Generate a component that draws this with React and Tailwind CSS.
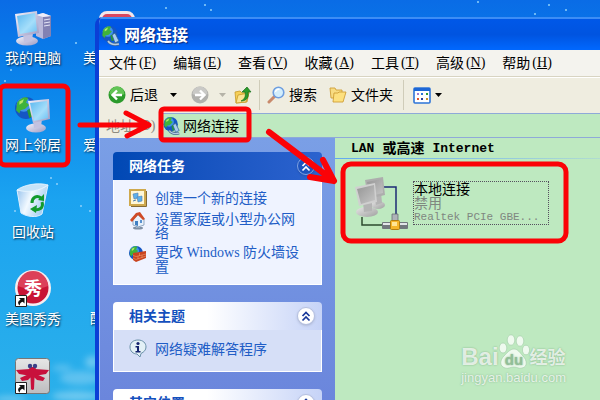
import { useState } from "react";

function ComputerIcon() {
  return (
    <svg className="h-10 w-10" viewBox="0 0 40 40">
      <defs>
        <linearGradient id="screen" x1="0" y1="0" x2="1" y2="1">
          <stop offset="0" stopColor="#5cb8f0" />
          <stop offset="0.6" stopColor="#a5defa" />
          <stop offset="1" stopColor="#6cc0f2" />
        </linearGradient>
        <linearGradient id="lilac" x1="0" y1="0" x2="1" y2="1">
          <stop offset="0" stopColor="#f4f3fc" />
          <stop offset="1" stopColor="#9c9bc4" />
        </linearGradient>
      </defs>
      <path d="M23 7l7-2 8 3v20l-8 3-7-3z" fill="#b9b8da" />
      <path d="M30 9l8-1v20l-8 3z" fill="#8281b3" />
      <path d="M31 12l6-1M31 15l6-1M31 18l6-1" stroke="#e6e6f7" strokeWidth="1" />
      <path d="M23 7l7-2 8 3-8 1z" fill="#eeeefa" />
      <ellipse cx="14" cy="33" rx="11" ry="4.5" fill="url(#lilac)" />
      <path d="M10 26l10-1-1 8-8 1z" fill="#c3c2e0" />
      <path d="M2 6l22-3 2 22-21 4z" fill="url(#lilac)" />
      <path d="M4 8l18-3 2 18-17 3z" fill="url(#screen)" />
    </svg>
  );
}

function GlobeShape({ cx, cy, r }) {
  const s = r / 10;
  return (
    <g transform={`translate(${cx} ${cy}) scale(${s})`}>
      <circle r="10" fill="#1556c4" />
      <circle cx="-2" cy="-3" r="6.5" fill="#3f93ea" />
      <path d="M-8-5c3-4 7-6 10-4l-2 4 3 2-4 4-4 1-1 3-3-3z" fill="#3fb33b" />
      <path d="M1 2l5-3 3 3-2 5-4 2z" fill="#279b36" />
      <path d="M-6-6l4-2-1 3-3 2z" fill="#b4e86e" />
    </g>
  );
}

function NetworkPlacesIcon() {
  return (
    <svg className="h-10 w-10" viewBox="0 0 40 40">
      <GlobeShape cx={13} cy={13} r={11} />
      <ellipse cx="23" cy="33" rx="10" ry="4.500" fill="url(#lilac)" />
      <path d="M20 25l9-1-1 8-7 1z" fill="#c3c2e0" />
      <path d="M15 6l21-2 1 20-17 4z" fill="url(#lilac)" />
      <path d="M17 8l17-2 1 17-14 3z" fill="url(#screen)" />
    </svg>
  );
}

function RecycleBinIcon() {
  return (
    <svg className="h-10 w-10" viewBox="0 0 40 40">
      <defs>
        <linearGradient id="bin" x1="0" y1="0" x2="1" y2="0.4">
          <stop offset="0" stopColor="#8dbdec" />
          <stop offset="0.5" stopColor="#f2f9ff" />
          <stop offset="1" stopColor="#a4cdf1" />
        </linearGradient>
      </defs>
      <path d="M4 8l4 23c6 4 16 5 21 1l6-29c-8 5-20 7-31 5z" fill="url(#bin)" stroke="#dcefff" />
      <path d="M4 8c6-5 21-8 31-5-8 6-21 8-31 5z" fill="#c6e3f8" stroke="#eef8ff" strokeWidth="0.8" />
      <g fill="none" stroke="#129b2d" strokeWidth="3">
        <path d="M19 21c0-6 5-8 9-5" />
        <path d="M29 20c2 6-3 9-9 7" />
      </g>
      <path d="M25 18l6 1v-7zM24 23l-7 4 6 4z" fill="#129b2d" />
    </svg>
  );
}

function ShortcutArrow() {
  return (
    <g>
      <path d="M2.500 26.500h11v11h-11z" fill="#fff" stroke="#222" />
      <path d="M6 29h5.500v5.500l-1.800-1.800c-2 .6-3 1.800-3 3.800-2.600-2.500-1.700-4.600.9-5.800z" fill="#111" />
    </g>
  );
}

function MeituIcon() {
  return (
    <svg className="h-10 w-10" viewBox="0 0 40 40">
      <circle cx="20" cy="19" r="18" fill="#f7eef0" />
      <circle cx="20" cy="19" r="15.500" fill="#c91435" />
      <path d="M5 17a15 15 0 0 1 30 0c-9 4-21 4-30 0z" fill="#dc4059" />
      <text x="20" y="26" textAnchor="middle" fontSize="18" fontWeight="700" fill="#fff">
        秀
      </text>
      <ShortcutArrow />
    </svg>
  );
}

function DragonflyIcon() {
  return (
    <svg className="h-10 w-10" viewBox="0 0 40 40">
      <defs>
        <linearGradient id="tile" x1="0" y1="0" x2="0" y2="1">
          <stop offset="0" stopColor="#e6e6e6" />
          <stop offset="1" stopColor="#bdbdbf" />
        </linearGradient>
      </defs>
      <rect x="2.500" y="2.500" width="34" height="35" rx="3" fill="url(#tile)" stroke="#777" />
      <path d="M16.500 11h6l1 6-2 5-.5 11q-1.500 2-3 0L17.500 22l-2-5z" fill="#c8103c" />
      <path d="M3 14l14-1h5l14 1-3 4-9 1.500h-9L6 18z" fill="#c8103c" />
      <path d="M16 18l-9 4 2 3 6-1 4-4h1l4 4 6 1 2-3-9-4z" fill="#c8103c" />
      <circle cx="17" cy="10" r="2.200" fill="#3b3f86" />
      <circle cx="22" cy="10" r="2.200" fill="#3b3f86" />
      <ShortcutArrow />
    </svg>
  );
}

function NetworkIcon({ className }) {
  return (
    <svg className={className} viewBox="0 0 20 20">
      <GlobeShape cx={8.5} cy={8} r={8} />
      <path d="M11 9l3-2 4 8-4 2z" fill="#a9cdee" stroke="#2f5f94" strokeWidth="0.8" />
      <path d="M7 15c2 3 6 4 11 3" fill="none" stroke="#47698f" strokeWidth="3" />
      <path d="M7 15c2 3 6 4 11 3" fill="none" stroke="#b4cbe2" strokeWidth="1.500" />
    </svg>
  );
}

function ArrowDisc({ color, light, back }) {
  return (
    <svg className="h-[18px] w-[18px]" viewBox="0 0 18 18">
      <circle cx="9" cy="9" r="8.500" fill={color} />
      <path d="M1.500 8a7.500 7.500 0 0 1 15 0c-4 2-11 2-15 0z" fill={light} />
      <path
        d={back ? "M14 9H5M9 4.500L4.500 9 9 13.500" : "M4 9h9M9 4.500L13.500 9 9 13.500"}
        fill="none"
        stroke="#fff"
        strokeWidth="2.400"
      />
    </svg>
  );
}

function Caret({ className }) {
  return (
    <svg className={`h-1 w-[7px] ${className}`} viewBox="0 0 7 4">
      <path d="M0 0h7L3.500 4z" fill="currentColor" />
    </svg>
  );
}

function FolderUpIcon() {
  return (
    <svg className="h-[18px] w-[18px]" viewBox="0 0 18 18">
      <path d="M1 6l5-1 2 2 7-1-2 10-11 1z" fill="#f6cf58" stroke="#c79a28" strokeWidth="0.8" />
      <path d="M4 9l11-2-3 9-10 1z" fill="#fbe493" stroke="#c79a28" strokeWidth="0.8" />
      <path d="M7 15c4-2 5-5 4-9H8l5-5 4 5h-3c1 5-1 9-7 9z" fill="#2c9b2b" stroke="#16701a" strokeWidth="0.700" />
    </svg>
  );
}

function SearchIcon() {
  return (
    <svg className="h-[18px] w-[18px]" viewBox="0 0 18 18">
      <path d="M8 10l-6 6" stroke="#c98a6c" strokeWidth="3" strokeLinecap="round" />
      <circle cx="11.500" cy="6.500" r="5.300" fill="#d3eefc" stroke="#6f9fe0" strokeWidth="1.600" />
      <path d="M8.500 6c0-2 2-3 4-2.500" stroke="#fff" strokeWidth="1.500" fill="none" />
    </svg>
  );
}

function FoldersIcon() {
  return (
    <svg className="h-[18px] w-[18px]" viewBox="0 0 18 18">
      <path d="M1 2h5l1 2h6v8H2z" fill="#f8dc82" stroke="#cf9e35" strokeWidth="0.900" />
      <path d="M5 7h4l1-1h7l-3 10H4z" fill="#fde07e" stroke="#cf9e35" strokeWidth="0.900" />
    </svg>
  );
}

function ViewsIcon() {
  return (
    <svg className="h-[17px] w-[18px]" viewBox="0 0 18 17">
      <rect x="1" y="1" width="16" height="15" rx="1" fill="#fff" stroke="#2d74d8" strokeWidth="1.600" />
      <path d="M1 1h16v3H1z" fill="#1d67d6" />
      <path d="M4 6h2v2H4z" fill="#a07bd0" />
      <path d="M8 6h2v2H8z" fill="#2b75d9" />
      <path d="M13 6h2v2h-2z" fill="#2b9a3a" />
      <path d="M4 11h2v2H4z" fill="#e2522b" />
      <path d="M8 11h2v2H8z" fill="#2b3d9a" />
      <path d="M13 11h2v2h-2z" fill="#c9902a" />
    </svg>
  );
}

function NewConnectionIcon() {
  return (
    <svg className="h-[18px] w-[18px] shrink-0" viewBox="0 0 18 18">
      <path d="M1 1h15v15H1z" fill="#fff7d8" stroke="#cfa94e" strokeWidth="2" />
      <path d="M17.500 2v15.500H2" fill="none" stroke="#856a35" />
      <path d="M4 5l5-1v5l-4 1z" fill="#5db0ec" stroke="#507cae" strokeWidth="0.600" />
      <path d="M8 8l5-1v5l-4 1z" fill="#5db0ec" stroke="#507cae" strokeWidth="0.600" />
      <path d="M4 12l3-1" stroke="#507cae" />
    </svg>
  );
}

function HomeIcon() {
  return (
    <svg className="h-[18px] w-[18px] shrink-0" viewBox="0 0 18 18">
      <ellipse cx="9" cy="16" rx="5" ry="1.500" fill="#7f8fa4" />
      <path d="M7 13h4v3H7z" fill="#9eb0c5" />
      <path d="M4 7l5-4 6 4v6l-6 2-5-2z" fill="#e8f1fb" stroke="#6f8bab" strokeWidth="0.700" />
      <path d="M1 8l6-7 4-1 5 7-2 1-5-5-6 7z" fill="#cf4a27" />
      <path d="M6 9h3v5l-3-1z" fill="#3f7fc3" />
      <path d="M11 8h2v3h-2z" fill="#5a92d0" />
    </svg>
  );
}

function FirewallIcon() {
  return (
    <svg className="h-[18px] w-[18px] shrink-0" viewBox="0 0 18 18">
      <GlobeShape cx={7} cy={8} r={7} />
      <path d="M4 8l13-2v7l-10 4-3-2z" fill="#c9441f" />
      <path d="M4 10.500l3 1 10-2.500M4 13l3 1.500 10-3.500M10.500 8v3M13 10v3M9 11v3" fill="none" stroke="#eb9a70" strokeWidth="0.600" />
    </svg>
  );
}

function InfoIcon() {
  return (
    <svg className="h-[19px] w-[18px] shrink-0" viewBox="0 0 18 19">
      <path d="M9 1c5 0 8 3 8 7 0 3-2 5-5 6.500L11 18l-3-3c-4 0-7-3-7-7s3-7 8-7z" fill="#e3f1f6" stroke="#6a90a8" />
      <circle cx="9" cy="4.500" r="1.600" fill="#14246e" />
      <path d="M6.500 7H10v5h1.500v1.500h-5V12H8V8.500H6.500z" fill="#14246e" />
    </svg>
  );
}

function LanIcon() {
  return (
    <svg className="h-[54px] w-[54px] shrink-0" viewBox="0 0 54 54">
      <defs>
        <linearGradient id="off" x1="0" y1="0" x2="1" y2="1">
          <stop offset="0" stopColor="#959595" />
          <stop offset="1" stopColor="#c6c6c6" />
        </linearGradient>
        <linearGradient id="base" x1="0" y1="0" x2="1" y2="1">
          <stop offset="0" stopColor="#e6e6e6" />
          <stop offset="1" stopColor="#9f9f9f" />
        </linearGradient>
      </defs>
      <path d="M29 10h12v28" fill="none" stroke="#1c2a75" strokeWidth="1.500" />
      <path d="M7 40v8h20" fill="none" stroke="#2c4a2e" strokeWidth="1.500" />
      <ellipse cx="23" cy="28" rx="7" ry="4" fill="url(#base)" />
      <path d="M19 17l7-2 1 11-6 2z" fill="#b4b4b4" />
      <path d="M10 3l18-3 2 18-17 4z" fill="#adadad" />
      <path d="M12 5l15-3 1 14-13 3z" fill="url(#off)" />
      <ellipse cx="12" cy="35" rx="11" ry="5" fill="url(#base)" />
      <path d="M8 25l9-2v11l-8 1z" fill="#b4b4b4" />
      <path d="M0 10l20-4 2 19-18 4z" fill="#d0d0d0" />
      <path d="M2 12l17-4 1 15-14 4z" fill="url(#off)" />
      <path d="M37 37h6v8h-6z" fill="#aeb3b8" stroke="#60666c" strokeWidth="0.700" />
      <rect x="27" y="45" width="26" height="7" rx="1" fill="#71777d" />
      <path d="M28 46h24v2H28z" fill="#e2e5e8" />
      <rect x="35.500" y="43.500" width="9" height="9" rx="1" fill="#f5b62b" stroke="#b27d12" />
      <path d="M37 45h5v4h-5z" fill="#ffe595" />
    </svg>
  );
}

const shortcuts = [
  { label: "我的电脑", icon: <ComputerIcon /> },
  { label: "网上邻居", icon: <NetworkPlacesIcon /> },
  { label: "回收站", icon: <RecycleBinIcon /> },
  { label: "美图秀秀", icon: <MeituIcon /> },
  { label: "", icon: <DragonflyIcon /> },
];

const menus = [
  ["文件", "F"],
  ["编辑", "E"],
  ["查看", "V"],
  ["收藏", "A"],
  ["工具", "T"],
  ["高级", "N"],
  ["帮助", "H"],
];

const mono = "font-['Liberation_Mono','Noto_Sans_CJK_SC',monospace]";
const serif = "font-['Liberation_Serif','Noto_Sans_CJK_SC',serif]";
const iconLabel = "text-sm leading-4 whitespace-nowrap text-white [text-shadow:1px_1px_2px_#06213f]";

function Shortcuts() {
  return (
    <div className="absolute top-2 left-0 flex w-[66px] flex-col">
      {shortcuts.map((item, i) => (
        <button key={i} className="flex h-[87px] flex-col items-center" aria-label={item.label || "快捷方式"}>
          <span className="h-10">{item.icon}</span>
          <span className={`mt-0.5 ${iconLabel}`}>{item.label}</span>
        </button>
      ))}
    </div>
  );
}

// second icon column, mostly behind the window
function CoveredShortcuts() {
  return (
    <div className="absolute top-[11px] left-[83px] flex flex-col">
      <div className="ml-4 flex h-[39px]">
        <div className="h-8 w-[36px] rounded-lg border-3 border-[#f2e6ea] bg-[#d8465f]" />
      </div>
      <span className={`h-[87px] ${iconLabel}`}>美</span>
      <span className={`h-[173px] ${iconLabel}`}>爱</span>
      <span className={`pl-[7px] ${iconLabel}`}>酷</span>
    </div>
  );
}

function Wallpaper() {
  return (
    <svg className="absolute inset-0 h-full w-full" viewBox="0 0 600 400" preserveAspectRatio="xMinYMin slice">
      <defs>
        <filter id="soft" x="-50%" y="-50%" width="200%" height="200%">
          <feGaussianBlur stdDeviation="3" />
        </filter>
      </defs>
      <g fill="#bfe6f8" filter="url(#soft)">
        <ellipse cx="80" cy="378" rx="20" ry="7" opacity="0.350" />
        <ellipse cx="92" cy="362" rx="7" ry="6" opacity="0.450" />
        <ellipse cx="62" cy="368" rx="10" ry="3" opacity="0.350" />
        <ellipse cx="76" cy="396" rx="24" ry="5" opacity="0.450" />
        <ellipse cx="10" cy="399" rx="16" ry="3" opacity="0.450" />
      </g>
      <g fill="#8fd0fa">
        <circle cx="76" cy="43" r="1" />
        <circle cx="11" cy="70" r="1" />
        <circle cx="5" cy="81" r="1" />
        <circle cx="51" cy="178" r="1" />
        <circle cx="57" cy="184" r="1" />
        <circle cx="15" cy="211" r="1" />
        <circle cx="81" cy="206" r="1" />
        <circle cx="90" cy="211" r="1" />
        <circle cx="166" cy="8" r="1" />
        <circle cx="205" cy="5" r="1" />
        <circle cx="211" cy="10" r="1" />
        <circle cx="478" cy="2" r="1" />
        <circle cx="549" cy="5" r="1" />
        <circle cx="566" cy="10" r="1" />
        <circle cx="535" cy="14" r="1" />
      </g>
    </svg>
  );
}

function TaskPanel({ title, primary, children }) {
  const [open, setOpen] = useState(true);
  return (
    <section>
      <div
        className={`flex h-7 items-center justify-between rounded-t pr-[7px] pl-4 ${
          primary
            ? "bg-linear-to-r from-[#0048b4] to-[#2c63cf]"
            : "bg-linear-to-r from-white from-45% to-[#c6d3f7]"
        }`}
      >
        <h2 className={`text-sm leading-4 font-bold ${primary ? "text-white" : "text-[#1450bd]"}`}>{title}</h2>
        <button
          onClick={() => setOpen(!open)}
          aria-label={open ? "折叠" : "展开"}
          className={`flex h-[18px] w-[18px] items-center justify-center rounded-full border shadow-sm ${
            primary ? "border-[#7fa2e4] bg-[#1d54bf] text-white" : "border-[#b4bfe0] bg-white text-[#17379a]"
          }`}
        >
          <svg className={`h-3 w-3 ${open ? "" : "rotate-180"}`} viewBox="0 0 12 12">
            <path d="M2.500 6L6 2.500 9.500 6M2.500 10.500L6 7l3.500 3.500" fill="none" stroke="currentColor" strokeWidth="1.700" />
          </svg>
        </button>
      </div>
      {open && (
        <div className={`border border-t-0 border-white px-[15px] pt-[9px] ${primary ? "bg-[#eff3ff] pb-[10px]" : "bg-[#d6dff7] pb-[13px]"}`}>
          {children}
        </div>
      )}
    </section>
  );
}

function TaskLink({ icon, center, children }) {
  return (
    <a
      href="#"
      className={`flex gap-2 text-sm leading-[14px] text-[#215dc6] ${center ? "items-center" : "items-start"}`}
    >
      {icon}
      <span className="w-[150px]">{children}</span>
    </a>
  );
}

function Toolbar() {
  return (
    <div className="flex h-[35px] shrink-0 items-center border-t border-white bg-[#efede0] pl-[9px] text-sm leading-4 whitespace-nowrap">
      <button className="flex items-center gap-1">
        <ArrowDisc back color="#2b9a2b" light="#62c455" />
        后退
      </button>
      <Caret className="ml-3 text-black" />
      <button className="ml-[14px]" aria-label="前进">
        <ArrowDisc color="#b0b0ac" light="#c9c9c6" />
      </button>
      <Caret className="ml-[10px] text-[#b5b3a8]" />
      <button className="ml-2" aria-label="向上">
        <FolderUpIcon />
      </button>
      <div className="mx-[7px] h-[30px] w-px shrink-0 bg-[#cfccb9]" />
      <button className="flex items-center gap-1">
        <SearchIcon />
        搜索
      </button>
      <button className="ml-3 flex items-center gap-1">
        <FoldersIcon />
        文件夹
      </button>
      <div className="mr-[9px] ml-[10px] h-[30px] w-px shrink-0 bg-[#cfccb9]" />
      <button className="flex items-center gap-1" aria-label="查看">
        <ViewsIcon />
        <Caret className="text-black" />
      </button>
    </div>
  );
}

function Sidebar() {
  return (
    <aside className="flex w-[236px] shrink-0 flex-col gap-[17px] overflow-hidden border-l border-[#a9c0f0] bg-linear-to-b from-[#7a9fe6] to-[#6b86dc] px-[13px] pt-[14px]">
      <TaskPanel title="网络任务" primary>
        <div className="flex flex-col gap-[5px]">
          <TaskLink icon={<NewConnectionIcon />} center>
            创建一个新的连接
          </TaskLink>
          <TaskLink icon={<HomeIcon />}>设置家庭或小型办公网络</TaskLink>
          <TaskLink icon={<FirewallIcon />}>
            更改<span className={serif}> Windows </span>防火墙设置
          </TaskLink>
        </div>
      </TaskPanel>
      <TaskPanel title="相关主题">
        <TaskLink icon={<InfoIcon />} center>
          网络疑难解答程序
        </TaskLink>
      </TaskPanel>
      <TaskPanel title="其它位置" />
    </aside>
  );
}

function ConnectionList() {
  return (
    <main className="min-w-0 flex-1 bg-[#bee9c0]">
      <h2 className={`flex h-5 items-center gap-2 pt-0.5 pl-4 text-[13px] leading-4 font-bold whitespace-nowrap text-black ${mono}`}>
        <span>LAN</span>
        <span className="text-sm leading-4">或高速</span>
        <span>Internet</span>
      </h2>
      <div className="h-px bg-linear-to-r from-[#62a8f0] to-[#b0dcd0]" />
      <button className="mt-[18px] ml-5 flex items-start gap-1 text-left">
        <LanIcon />
        <span className="mt-1 flex w-[136px] flex-col border border-dotted border-[#55505f] text-sm leading-[14px] text-[#808780]">
          <span className="text-black">本地连接</span>
          <span>禁用</span>
          <span className={`text-[11px] leading-[14px] ${mono}`}>Realtek PCIe GBE...</span>
        </span>
      </button>
    </main>
  );
}

function ExplorerWindow() {
  return (
    <div className="absolute top-[17px] right-0 bottom-0 left-[95px] flex flex-col overflow-hidden rounded-tl-lg border-l-4 border-[#0b3fd6] bg-[#f3f2ea] text-black">
      <header className="flex h-[33px] shrink-0 items-center gap-[3px] border-t-2 border-[#3d8df5] bg-linear-to-b from-[#0058e8] via-[#0054e0] to-[#0068ff] pt-0.5 pl-0.5">
        <NetworkIcon className="h-5 w-5" />
        <h1 className="text-base leading-5 font-bold text-white [text-shadow:1px_1px_1px_#0a2a80]">网络连接</h1>
      </header>
      <nav className="flex h-[27px] shrink-0 items-center gap-[17px] border-b border-[#d8d4c2] bg-[#f4f3ee] pl-[10px]">
        {menus.map(([label, key]) => (
          <button key={key} className="flex gap-0.5 text-sm leading-4 whitespace-nowrap">
            {label}
            <span className={serif}>
              (<u>{key}</u>)
            </span>
          </button>
        ))}
      </nav>
      <Toolbar />
      <div className="flex h-[26px] shrink-0 items-stretch bg-[#efede0] pt-px">
        <label htmlFor="address" className="flex w-[63px] items-center gap-0.5 pl-[7px] text-sm leading-4 text-[#8d8b80]">
          地址<span className={serif}>(D)</span>
        </label>
        <div className="flex min-w-0 flex-1 items-center gap-0.5 border-y border-[#8fa9d8] bg-[#bee9c0] pl-px">
          <NetworkIcon className="h-[18px] w-[18px] shrink-0" />
          <input
            id="address"
            defaultValue="网络连接"
            className="h-4 min-w-0 flex-1 bg-transparent text-sm leading-4 outline-none"
          />
        </div>
      </div>
      <div className="flex min-h-0 flex-1">
        <Sidebar />
        <ConnectionList />
      </div>
    </div>
  );
}

// Red boxes and arrows that walk the reader through the steps
function Annotations() {
  return (
    <svg
      className="pointer-events-none absolute top-0 left-0 h-[400px] w-[600px]"
      viewBox="0 0 600 400"
      fill="none"
      stroke="#fb0207"
      strokeLinecap="round"
      strokeLinejoin="round"
    >
      <rect x="0" y="86" width="68" height="79" rx="5" strokeWidth="5" />
      <rect x="161" y="109" width="88" height="31" rx="3" strokeWidth="5" />
      <rect x="343" y="164" width="223" height="77" rx="8" strokeWidth="5" />
      <path d="M80 125h69M126 113l23 12-22 11" strokeWidth="5" />
      <path d="M269 132l65 49M323 160l11 21-24-4" strokeWidth="6" />
    </svg>
  );
}

function Watermark() {
  return (
    <div className="absolute right-[34px] bottom-[14px] text-white/75 [text-shadow:0_0_2px_#7fae86]">
      <div className="flex h-9 items-end">
        <span className="text-2xl leading-[26px] font-bold">Bai</span>
        <svg className="h-9 w-[31px]" viewBox="0 0 31 36">
          <g fill="#fff" fillOpacity="0.750" stroke="#9fcaa4" strokeWidth="0.600">
            <ellipse cx="4" cy="14" rx="3.800" ry="5" />
            <ellipse cx="12" cy="6" rx="3.800" ry="5.200" />
            <ellipse cx="21" cy="7" rx="3.800" ry="5.200" />
            <ellipse cx="27" cy="16" rx="3.600" ry="4.800" />
            <path d="M15 15c4 0 6 4 9 7 4 4 5 11-1 12-3 1-5-1-8-1s-6 2-9 1c-6-2-5-8-1-12 3-3 6-7 10-7z" />
          </g>
          <text x="15" y="31" textAnchor="middle" fontSize="15" fontWeight="700" fill="#92bf97">
            du
          </text>
        </svg>
        <span className="text-lg leading-6 font-bold">经验</span>
      </div>
      <div className="text-[13px] leading-4">jingyan.baidu.com</div>
    </div>
  );
}

export default function App() {
  return (
    <div className="relative h-screen overflow-hidden bg-linear-to-b from-[#0a6ce6] via-[#1ba3f0] to-[#2bb0ea] font-['Liberation_Sans','Noto_Sans_CJK_SC',sans-serif]">
      <Wallpaper />
      <Shortcuts />
      <CoveredShortcuts />
      <ExplorerWindow />
      <Watermark />
      <Annotations />
    </div>
  );
}
